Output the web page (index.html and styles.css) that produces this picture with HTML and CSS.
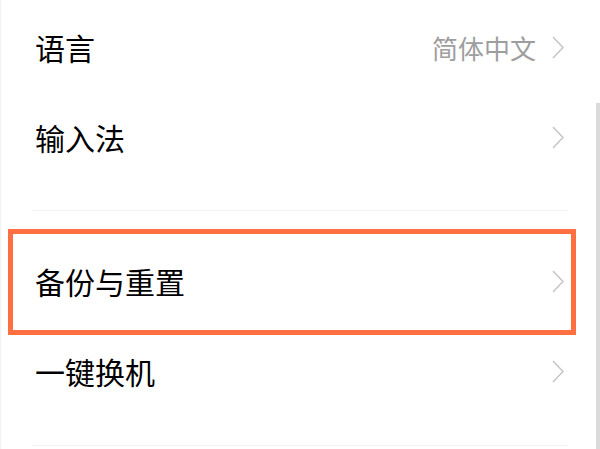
FILE: index.html
```html
<!DOCTYPE html>
<html lang="zh-CN">
<head>
    <meta charset="UTF-8">
    <meta name="viewport" content="width=device-width, initial-scale=1.0">
    <title>系统设置</title>
    <link rel="stylesheet" href="styles.css">
</head>
<body>
    <div class="settings">
        <div class="group first">
            <div class="row">
                <span class="label">语言</span>
                <span class="value">简体中文</span>
                <svg class="chevron" viewBox="0 0 12 23"><polyline points="1,1 11,11.5 1,22"/></svg>
            </div>
            <div class="row">
                <span class="label">输入法</span>
                <svg class="chevron" viewBox="0 0 12 23"><polyline points="1,1 11,11.5 1,22"/></svg>
            </div>
        </div>
        <div class="divider"></div>
        <div class="group">
            <div class="row highlighted">
                <span class="label">备份与重置</span>
                <svg class="chevron" viewBox="0 0 12 23"><polyline points="1,1 11,11.5 1,22"/></svg>
            </div>
            <div class="row">
                <span class="label">一键换机</span>
                <svg class="chevron" viewBox="0 0 12 23"><polyline points="1,1 11,11.5 1,22"/></svg>
            </div>
        </div>
        <div class="divider"></div>
        <div class="scrollbar"></div>
    </div>
</body>
</html>
```

FILE: styles.css
```css
body {
    margin: 0;
    background: #fff;
    font-family: "Noto Sans CJK SC", "Noto Sans", sans-serif;
}
.settings {
    position: relative;
    height: 449px;
    overflow: hidden;
    border-left: 1px solid #f2f2f2;
    box-sizing: border-box;
}
.group {
    padding-top: 25px;
    padding-bottom: 29px;
}
.group.first {
    padding-top: 2px;
    padding-bottom: 28px;
}
.row {
    position: relative;
    height: 90px;
    display: flex;
    align-items: center;
    padding: 0 36px 0 34px;
}
.label {
    flex: 1;
    font-size: 30px;
    color: #000;
}
.value {
    font-size: 26px;
    color: #9e9e9e;
    margin-right: 16px;
}
.chevron {
    width: 12px;
    height: 23px;
}
.chevron polyline {
    fill: none;
    stroke: #c6c6c6;
    stroke-width: 1.6;
}
.divider {
    height: 1px;
    background: #f3f3f3;
    margin: 0 33px 0 32px;
}
.highlighted::after {
    content: "";
    position: absolute;
    top: -7px;
    bottom: -9px;
    left: 7px;
    right: 24px;
    border: 5px solid #fe7042;
}
.scrollbar {
    position: absolute;
    top: 103px;
    right: 0;
    width: 4px;
    bottom: 0;
    background: #dadada;
}
```
